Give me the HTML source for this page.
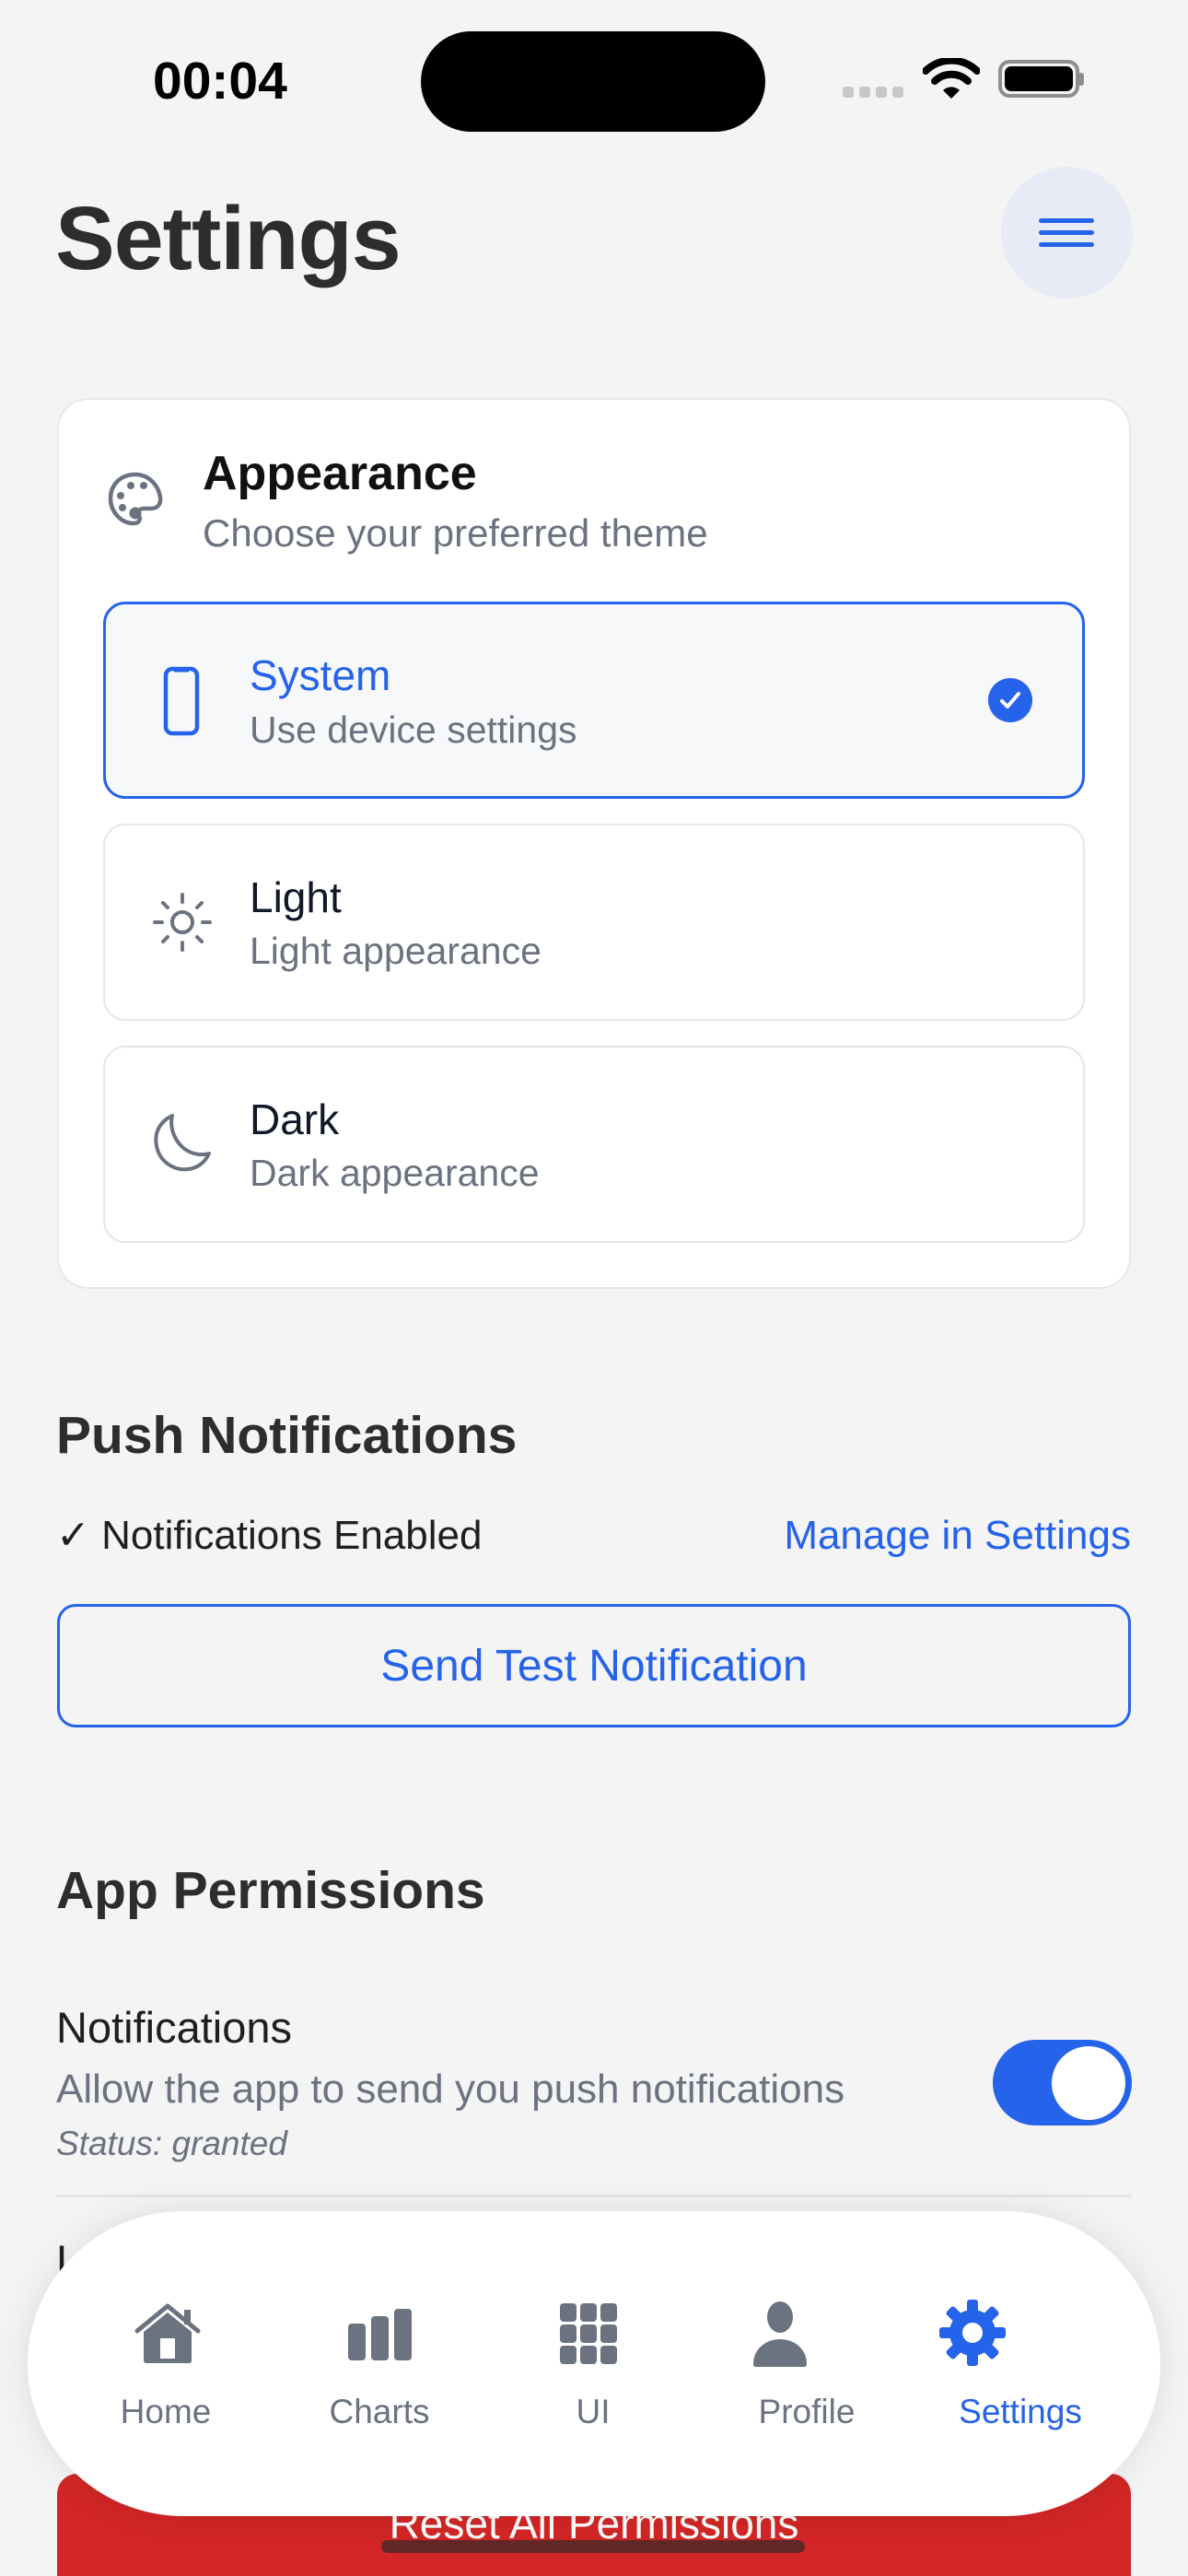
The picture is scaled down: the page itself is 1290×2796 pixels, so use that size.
<!DOCTYPE html>
<html><head><meta charset="utf-8">
<style>
*{margin:0;padding:0;box-sizing:border-box}
html,body{width:1290px;height:2796px;overflow:hidden;background:#f4f4f4;font-family:"Liberation Sans",sans-serif;position:relative}
.a{position:absolute;white-space:nowrap;line-height:1}
.opt{position:absolute;left:112px;width:1066px;height:214px;border:2px solid #e5e7eb;border-radius:24px;background:#fff}
.t{font-size:46px;color:#111827}
.s{font-size:41px;color:#6b7280}
.nl{font-size:37px;color:#6b7280;text-align:center;width:200px}
</style></head><body>
<!-- status bar -->
<div class="a" style="left:166px;top:60px;font-size:57px;font-weight:bold;color:#000">00:04</div>
<div class="a" style="left:457px;top:34px;width:374px;height:109px;border-radius:55px;background:#000"></div>
<div class="a" style="left:915px;top:94px;width:12px;height:12px;border-radius:3px;background:#c8c8c8"></div>
<div class="a" style="left:933px;top:94px;width:12px;height:12px;border-radius:3px;background:#c8c8c8"></div>
<div class="a" style="left:951px;top:94px;width:12px;height:12px;border-radius:3px;background:#c8c8c8"></div>
<div class="a" style="left:969px;top:94px;width:12px;height:12px;border-radius:3px;background:#c8c8c8"></div>
<svg class="a" style="left:1002px;top:63px" width="62" height="46" viewBox="0 0 62 46"><path d="M3 14 A40 40 0 0 1 59 14" stroke="#000" stroke-width="8" fill="none" stroke-linecap="round"/><path d="M13 25 A26 26 0 0 1 49 25" stroke="#000" stroke-width="8" fill="none" stroke-linecap="round"/><path d="M22 35 L31 44 L40 35 A13 13 0 0 0 22 35Z" fill="#000"/></svg>
<div class="a" style="left:1084px;top:65px;width:88px;height:41px;border:4px solid #8e8e8e;border-radius:12px"></div>
<div class="a" style="left:1091px;top:72px;width:74px;height:27px;border-radius:7px;background:#000"></div>
<div class="a" style="left:1172px;top:79px;width:5px;height:14px;border-radius:0 3px 3px 0;background:#8e8e8e"></div>

<!-- header -->
<div class="a" style="left:60px;top:210px;font-size:97px;font-weight:bold;color:#2d2d2d;letter-spacing:-1px">Settings</div>
<div class="a" style="left:1087px;top:181px;width:143px;height:143px;border-radius:50%;background:#e7ebf6"></div>
<div class="a" style="left:1128px;top:237px;width:60px;height:5px;border-radius:3px;background:#2563eb"></div>
<div class="a" style="left:1128px;top:250px;width:60px;height:5px;border-radius:3px;background:#2563eb"></div>
<div class="a" style="left:1128px;top:263px;width:60px;height:5px;border-radius:3px;background:#2563eb"></div>

<!-- appearance card -->
<div class="a" style="left:62px;top:432px;width:1166px;height:967px;background:#fff;border:2px solid #e8e8e8;border-radius:34px"></div>
<svg class="a" style="left:116px;top:511px" width="62" height="62" viewBox="0 0 62 62"><path d="M31 4C15 4 4 15 4 30c0 15 12 27 25 27 6 0 8-4 6-8-2-4 0-8 5-8h8c7 0 11-5 10-12C56 15 45 4 31 4z" fill="none" stroke="#6b7280" stroke-width="4.5" stroke-linejoin="round"/><circle cx="26" cy="16" r="4" fill="#6b7280"/><circle cx="40" cy="16" r="4" fill="#6b7280"/><circle cx="15" cy="27" r="4" fill="#6b7280"/><circle cx="17" cy="40" r="4" fill="#6b7280"/><circle cx="31" cy="46" r="6.5" fill="#6b7280"/></svg>
<div class="a" style="left:220px;top:488px;font-size:52px;font-weight:bold;color:#111;">Appearance</div>
<div class="a" style="left:220px;top:558px;font-size:42px;color:#6b7280">Choose your preferred theme</div>

<div class="opt" style="top:653px;border:3px solid #2563eb;background:#f7f8fa"></div>
<svg class="a" style="left:177px;top:723px" width="40" height="76" viewBox="0 0 40 76"><rect x="3" y="3" width="34" height="70" rx="7" fill="none" stroke="#2563eb" stroke-width="4.5"/><path d="M12 4h16" stroke="#2563eb" stroke-width="5"/></svg>
<div class="a t" style="left:271px;top:710px;color:#2563eb">System</div>
<div class="a s" style="left:271px;top:772px">Use device settings</div>
<div class="a" style="left:1073px;top:736px;width:48px;height:48px;border-radius:50%;background:#2563eb"></div>
<svg class="a" style="left:1073px;top:736px" width="48" height="48" viewBox="0 0 48 48"><path d="M15 25l6 6 12-14" stroke="#fff" stroke-width="4" fill="none" stroke-linecap="round" stroke-linejoin="round"/></svg>

<div class="opt" style="top:894px"></div>
<svg class="a" style="left:165px;top:968px" width="66" height="66" viewBox="0 0 66 66"><circle cx="33" cy="33" r="11" fill="none" stroke="#6b7280" stroke-width="4"/><g stroke="#6b7280" stroke-width="4" stroke-linecap="round"><path d="M33 3v8M33 55v8M3 33h8M55 33h8M12 12l5 5M49 49l5 5M12 54l5-5M49 17l5-5"/></g></svg>
<div class="a t" style="left:271px;top:951px">Light</div>
<div class="a s" style="left:271px;top:1012px">Light appearance</div>

<div class="opt" style="top:1135px"></div>
<svg class="a" style="left:164px;top:1207px" width="70" height="70" viewBox="0 0 70 70"><path d="M23 4C10 10 3 22 6 37c3 16 18 27 34 25 11-1 19-8 23-17-10 3-22 0-30-8C25 29 20 16 23 4z" fill="none" stroke="#6b7280" stroke-width="4" stroke-linejoin="round"/></svg>
<div class="a t" style="left:271px;top:1192px">Dark</div>
<div class="a s" style="left:271px;top:1253px">Dark appearance</div>

<!-- push notifications -->
<div class="a" style="left:61px;top:1530px;font-size:57px;font-weight:bold;color:#2d2d2d">Push Notifications</div>
<div class="a" style="left:61px;top:1645px;font-size:44px;color:#1f1f1f">✓ Notifications Enabled</div>
<div class="a" style="right:62px;top:1645px;font-size:44px;color:#2563eb">Manage in Settings</div>
<div class="a" style="left:62px;top:1741px;width:1166px;height:134px;border:3px solid #2563eb;border-radius:20px"></div>
<div class="a" style="left:62px;top:1785px;width:1166px;text-align:center;font-size:48px;color:#2563eb">Send Test Notification</div>

<!-- app permissions -->
<div class="a" style="left:61px;top:2024px;font-size:57px;font-weight:bold;color:#2d2d2d">App Permissions</div>
<div class="a" style="left:61px;top:2177px;font-size:47px;color:#1f1f1f">Notifications</div>
<div class="a" style="left:61px;top:2246px;font-size:44px;color:#6b7280">Allow the app to send you push notifications</div>
<div class="a" style="left:61px;top:2308px;font-size:37px;font-style:italic;color:#6b7280">Status: granted</div>
<div class="a" style="left:1078px;top:2214px;width:151px;height:93px;border-radius:47px;background:#2563eb"></div>
<div class="a" style="left:1142px;top:2221px;width:80px;height:80px;border-radius:50%;background:#fff"></div>
<div class="a" style="left:61px;top:2382px;width:1168px;height:3px;background:#e2e4e8"></div>
<div class="a" style="left:61px;top:2430px;font-size:47px;color:#1f1f1f">Location</div>

<!-- reset button -->
<div class="a" style="left:62px;top:2685px;width:1166px;height:140px;border-radius:22px;background:#d32626"></div>
<div class="a" style="left:62px;top:2716px;width:1166px;text-align:center;font-size:46px;color:#fff">Reset All Permissions</div>

<!-- nav -->
<div class="a" style="left:30px;top:2400px;width:1230px;height:331px;border-radius:170px/166px;background:#fff;box-shadow:0 0 40px rgba(0,0,0,0.10)"></div>
<svg class="a" style="left:146px;top:2500px" width="72" height="66" viewBox="0 0 72 66"><path d="M3 30L36 3 69 30" stroke="#6b7280" stroke-width="5" fill="none" stroke-linecap="round" stroke-linejoin="round"/><rect x="54" y="7" width="7" height="16" fill="#6b7280"/><path d="M10 31L36 10 62 31V62q0 3-3 3H13q-3 0-3-3z" fill="#6b7280"/><rect x="28" y="38" width="16" height="22" fill="#fff"/></svg>
<svg class="a" style="left:378px;top:2506px" width="72" height="56" viewBox="0 0 72 56"><rect x="0" y="16" width="19" height="40" rx="4" fill="#6b7280"/><rect x="25" y="8" width="19" height="48" rx="4" fill="#6b7280"/><rect x="50" y="0" width="19" height="56" rx="4" fill="#6b7280"/></svg>
<svg class="a" style="left:608px;top:2500px" width="62" height="66" viewBox="0 0 62 66"><g fill="#6b7280"><rect x="0" y="0" width="18" height="20" rx="4"/><rect x="22" y="0" width="18" height="20" rx="4"/><rect x="44" y="0" width="18" height="20" rx="4"/><rect x="0" y="23" width="18" height="20" rx="4"/><rect x="22" y="23" width="18" height="20" rx="4"/><rect x="44" y="23" width="18" height="20" rx="4"/><rect x="0" y="46" width="18" height="20" rx="4"/><rect x="22" y="46" width="18" height="20" rx="4"/><rect x="44" y="46" width="18" height="20" rx="4"/></g></svg>
<svg class="a" style="left:817px;top:2498px" width="60" height="71" viewBox="0 0 60 71"><ellipse cx="30" cy="17" rx="14" ry="17" fill="#6b7280"/><path d="M1 68C1 52 14 41 30 41s29 11 29 27q0 3-3 3H4q-3 0-3-3z" fill="#6b7280"/></svg>
<svg class="a" style="left:1020px;top:2496px" width="72" height="72" viewBox="-36 -36 72 72"><g fill="#2563eb"><circle r="25"/><g id="tt"><rect x="-6" y="-36" width="12" height="16" rx="3"/></g><use href="#tt" transform="rotate(45)"/><use href="#tt" transform="rotate(90)"/><use href="#tt" transform="rotate(135)"/><use href="#tt" transform="rotate(180)"/><use href="#tt" transform="rotate(225)"/><use href="#tt" transform="rotate(270)"/><use href="#tt" transform="rotate(315)"/></g><circle r="11" fill="#fff"/></svg>
<div class="a nl" style="left:80px;top:2599px">Home</div>
<div class="a nl" style="left:312px;top:2599px">Charts</div>
<div class="a nl" style="left:544px;top:2599px">UI</div>
<div class="a nl" style="left:776px;top:2599px">Profile</div>
<div class="a nl" style="left:1008px;top:2599px;color:#2563eb">Settings</div>

<div class="a" style="left:414px;top:2757px;width:460px;height:14px;border-radius:7px;background:rgba(60,40,40,0.75)"></div>
</body></html>
